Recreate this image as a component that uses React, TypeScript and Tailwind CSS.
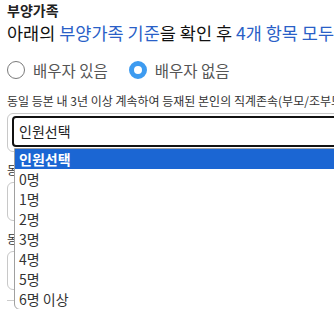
import React from "react";

const options = ["인원선택", "0명", "1명", "2명", "3명", "4명", "5명", "6명 이상"];

const FONT = "font-['Malgun_Gothic','Noto_Sans_CJK_KR',sans-serif]";

function Radio({ label, checked }: { label: string; checked?: boolean }) {
  return (
    <label className="flex items-center gap-[8px]">
      {checked ? (
        <span className="w-[18px] h-[18px] rounded-full border-[5px] border-[#3d9bf0] bg-white" />
      ) : (
        <span className="w-[18px] h-[18px] rounded-full border border-[#7a7a7a] bg-white" />
      )}
      <span className="text-[15.5px] leading-[20px] text-[#555]">{label}</span>
    </label>
  );
}

function Field({ open }: { open?: boolean }) {
  return (
    <div className="relative">
      <p className="text-[12px] leading-[16px] text-[#333] whitespace-nowrap">
        동일 등본 내 3년 이상 계속하여 등재된 본인의 직계존속(부모/조부모)
      </p>
      <div className="mt-[4px] w-[360px] h-[39px] rounded-[6px] border border-[#c8c8c8] bg-white p-[2px_4px_4px_4px]">
        {open && (
          <div className="h-[31px] rounded-[4px] border-2 border-[#111] bg-white flex items-center pl-[5px] text-[14px] text-[#222]">
            인원선택
          </div>
        )}
      </div>
      {open && (
        <ul className="absolute left-[7px] top-[55px] w-[360px] bg-white border border-[#a0a0a0] rounded-bl-[6px] z-10">
          {options.map((o, i) => (
            <li
              key={o}
              className={
                i === 0
                  ? "h-[20px] leading-[20px] pl-[4px] text-[14px] font-bold text-white bg-[#1b66d3]"
                  : "h-[20px] leading-[20px] pl-[4px] text-[14px] text-[#333]"
              }
            >
              {o}
            </li>
          ))}
        </ul>
      )}
    </div>
  );
}

export default function App() {
  return (
    <div className={`w-[334px] h-[309px] overflow-hidden bg-white pl-[7px] ${FONT}`}>
      <h3 className="pt-[1px] text-[14px] leading-[18px] font-bold text-[#222]">부양가족</h3>
      <p className="mt-[3px] text-[17.5px] leading-[22px] text-[#111] whitespace-nowrap">
        아래의 <span className="text-[#2a5fc7]">부양가족 기준</span>을 확인 후{" "}
        <span className="text-[#2a5fc7]">4개 항목 모두</span> 입력해주세요
      </p>
      <div className="mt-[16px] flex items-center gap-[21px]">
        <Radio label="배우자 있음" />
        <Radio label="배우자 없음" checked />
      </div>
      <div className="mt-[13px] flex flex-col gap-[10px]">
        <Field open />
        <Field />
        <Field />
      </div>
      <div className="mt-[10px] h-px w-full bg-[#ccc]" />
    </div>
  );
}
